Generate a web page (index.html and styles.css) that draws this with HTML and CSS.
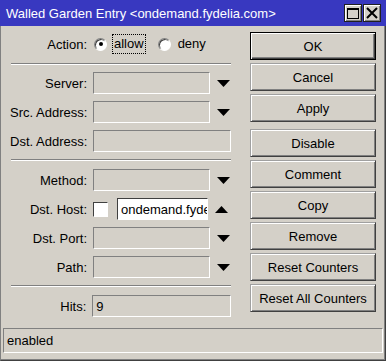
FILE: index.html
```html
<!DOCTYPE html>
<html lang="en">
<head>
  <meta charset="UTF-8">
  <meta name="viewport" content="width=device-width, initial-scale=1.0">
  <title>Walled Garden Entry</title>
  <link rel="stylesheet" href="styles.css">
</head>
<body>
  <div class="window">
    <div class="titlebar">
      <span class="title">Walled Garden Entry &lt;ondemand.fydelia.com&gt;</span>
      <div class="title-buttons">
        <span class="tbtn"><span class="max-icon"></span></span>
        <span class="tbtn">
          <svg width="12" height="12" viewBox="0 0 12 12">
            <path d="M1 1 L11 11 M11 1 L1 11" stroke="#000" stroke-width="2" fill="none"/>
          </svg>
        </span>
      </div>
    </div>

    <div class="content">
      <div class="form">
        <div class="row action-row">
          <span class="label">Action:</span>
          <span class="radio checked"></span>
          <span class="radio-text focus">allow</span>
          <span class="radio second"></span>
          <span class="radio-text">deny</span>
        </div>

        <div class="sep first"></div>

        <div class="row">
          <span class="label">Server:</span>
          <span class="field combo"></span>
          <svg class="arrow" width="13" height="7" viewBox="0 0 13 7"><polygon points="0,0 13,0 6.5,7" fill="#000"/></svg>
        </div>
        <div class="row">
          <span class="label">Src. Address:</span>
          <span class="field combo"></span>
          <svg class="arrow" width="13" height="7" viewBox="0 0 13 7"><polygon points="0,0 13,0 6.5,7" fill="#000"/></svg>
        </div>
        <div class="row">
          <span class="label">Dst. Address:</span>
          <span class="field wide"></span>
        </div>

        <div class="sep"></div>

        <div class="row">
          <span class="label">Method:</span>
          <span class="field combo"></span>
          <svg class="arrow" width="13" height="7" viewBox="0 0 13 7"><polygon points="0,0 13,0 6.5,7" fill="#000"/></svg>
        </div>
        <div class="row">
          <span class="label">Dst. Host:</span>
          <span class="checkbox"></span>
          <input class="host" type="text" value="ondemand.fydelia.com">
          <svg class="arrow" width="13" height="7" viewBox="0 0 13 7"><polygon points="0,7 13,7 6.5,0" fill="#000"/></svg>
        </div>
        <div class="row">
          <span class="label">Dst. Port:</span>
          <span class="field combo"></span>
          <svg class="arrow" width="13" height="7" viewBox="0 0 13 7"><polygon points="0,0 13,0 6.5,7" fill="#000"/></svg>
        </div>
        <div class="row">
          <span class="label">Path:</span>
          <span class="field combo"></span>
          <svg class="arrow" width="13" height="7" viewBox="0 0 13 7"><polygon points="0,0 13,0 6.5,7" fill="#000"/></svg>
        </div>

        <div class="sep"></div>

        <div class="row">
          <span class="label">Hits:</span>
          <span class="field wide">9</span>
        </div>
      </div>

      <div class="buttons">
        <button class="btn default">OK</button>
        <button class="btn">Cancel</button>
        <button class="btn">Apply</button>
        <button class="btn group">Disable</button>
        <button class="btn">Comment</button>
        <button class="btn">Copy</button>
        <button class="btn">Remove</button>
        <button class="btn">Reset Counters</button>
        <button class="btn">Reset All Counters</button>
      </div>
    </div>

    <div class="statusbar">enabled</div>
  </div>
</body>
</html>
```

FILE: styles.css
```css
body {
  margin: 0;
  padding: 0;
  font-family: "Liberation Sans", Arial, sans-serif;
  font-size: 13px;
  color: #000;
}

.window {
  width: 386px;
  height: 361px;
  box-sizing: border-box;
  display: flex;
  flex-direction: column;
  background-color: #d4d0c8;
  border-left: 1px solid #808080;
  border-right: 1px solid #404040;
  border-bottom: 1px solid #404040;
  box-shadow: inset -1px -1px #808080;
}

.titlebar {
  height: 26px;
  margin-left: -1px;
  margin-right: -1px;
  display: flex;
  align-items: center;
  justify-content: space-between;
  background-color: #3838c0;
  color: #fff;
  padding: 0 5px 0 6px;
}

.title {
  font-size: 13px;
  white-space: nowrap;
}

.title-buttons {
  display: flex;
  gap: 1px;
}

.tbtn {
  width: 16px;
  height: 16px;
  display: flex;
  align-items: center;
  justify-content: center;
  background-color: #d4d0c8;
  border: 1px solid #202020;
  box-shadow: inset 1px 1px #ffffff, inset -1px -1px #808080;
}

.max-icon {
  width: 10px;
  height: 8px;
  border: 1px solid #000;
  border-top-width: 2px;
}

.content {
  flex: 1;
  display: flex;
}

.form {
  width: 221px;
  padding: 7px 0 0 9px;
}

.row {
  height: 22px;
  display: flex;
  align-items: center;
  margin-bottom: 7px;
}

.label {
  width: 77px;
  margin-right: 6px;
  text-align: right;
  white-space: nowrap;
}

.action-row {
  margin-bottom: 8px;
}

.radio {
  width: 11px;
  height: 11px;
  margin-left: 1px;
  border-radius: 50%;
  background-color: #fff;
  border: 1px solid;
  border-color: #808080 #ffffff #ffffff #808080;
  box-shadow: inset 1px 1px #404040;
  display: flex;
  align-items: center;
  justify-content: center;
}

.radio.checked::after {
  content: "";
  width: 4px;
  height: 4px;
  border-radius: 50%;
  background-color: #000;
}

.radio.second {
  margin-left: 12px;
}

.radio-text {
  margin-left: 5px;
  padding: 1px 1px 2px 1px;
  border: 1px solid transparent;
}

.radio-text.focus {
  border: 1px dotted #000;
}

.sep {
  height: 0;
  border-top: 1px solid #808080;
  border-bottom: 1px solid #ffffff;
  margin: 2px 0 8px 1px;
}

.sep.first {
  margin-top: 0;
  margin-bottom: 7px;
}

.field {
  height: 20px;
  box-sizing: content-box;
  border: 1px solid;
  border-color: #808080 #ffffff #ffffff #808080;
  display: flex;
  align-items: center;
  padding-left: 3px;
  overflow: hidden;
  white-space: nowrap;
}

.field.combo {
  width: 112px;
}

.field.wide {
  width: 135px;
}

.host {
  width: 86px;
  height: 20px;
  box-sizing: content-box;
  margin: 0 0 0 9px;
  padding: 0 0 0 3px;
  font-family: "Liberation Sans", Arial, sans-serif;
  font-size: 13px;
  color: #000;
  background-color: #fff;
  border: 1px solid;
  border-color: #404040 #ffffff #ffffff #404040;
  outline: none;
}

.checkbox {
  width: 13px;
  height: 13px;
  background-color: #fff;
  border: 1px solid;
  border-color: #404040 #ffffff #ffffff #404040;
}

.arrow {
  margin-left: 7px;
}

.buttons {
  width: 126px;
  margin-left: 19px;
  padding-top: 6px;
  display: flex;
  flex-direction: column;
  gap: 3px;
}

.btn {
  height: 28px;
  width: 126px;
  font-family: "Liberation Sans", Arial, sans-serif;
  font-size: 13px;
  color: #000;
  background-color: #d4d0c8;
  border: 1px solid;
  border-color: #a0a0a0 #404040 #404040 #a0a0a0;
  box-shadow: inset 1px 1px #ffffff, inset -1px -1px #808080;
  padding: 0;
}

.btn.default {
  border-color: #000;
  box-shadow: inset 1px 1px #ffffff, inset -1px -1px #404040, inset -2px -2px #808080;
}

.btn.group {
  margin-top: 4px;
}

.statusbar {
  height: 23px;
  margin: 0 2px 7px 2px;
  padding-left: 3px;
  display: flex;
  align-items: center;
  border: 1px solid;
  border-color: #808080 #ffffff #ffffff #808080;
}
```
